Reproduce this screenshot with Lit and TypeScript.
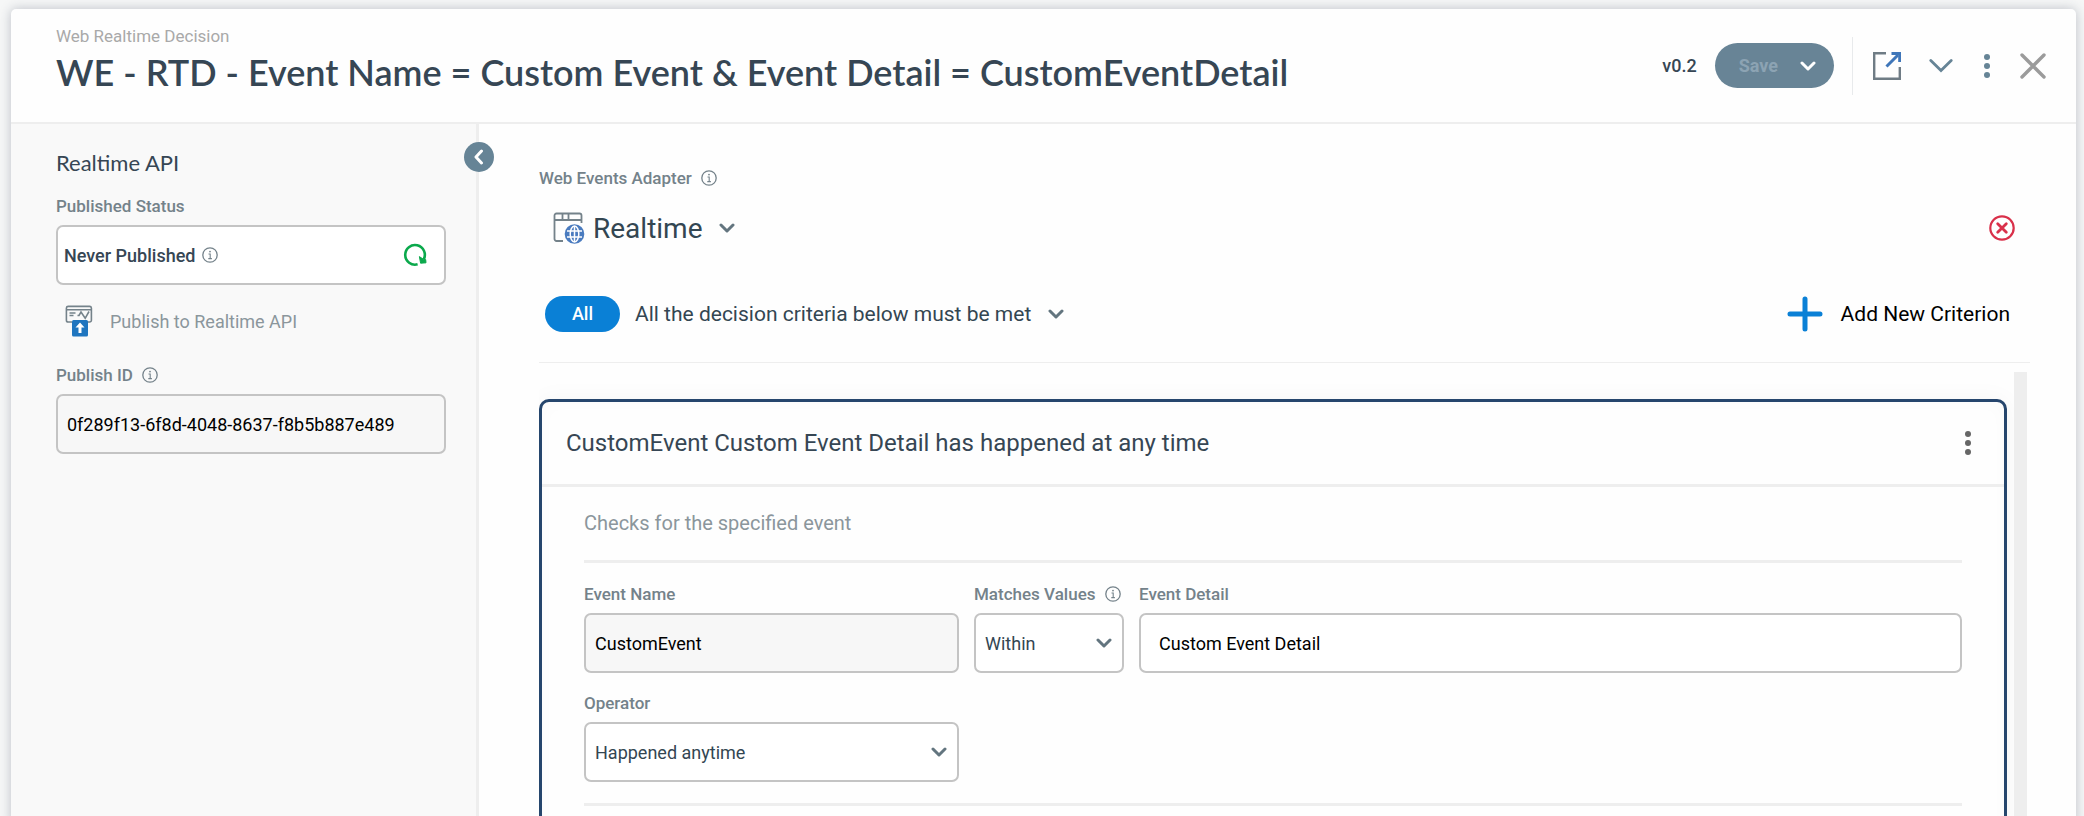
import { LitElement, html, css, svg } from "lit";
import { customElement, property } from "lit/decorators.js";

const infoIcon = html`<svg class="info" viewBox="0 0 16 16" width="16" height="16" role="img" aria-label="Information">
  <circle cx="8" cy="8" r="7.2" fill="none" stroke="#74828a" stroke-width="1.3"></circle>
  <circle cx="8" cy="4.6" r="0.9" fill="#74828a"></circle>
  <path d="M6.5 7h1.7v4.4M6.3 11.6h3.6" fill="none" stroke="#74828a" stroke-width="1.1"></path>
</svg>`;

const chevron = (color: string) => html`<svg class="chev" viewBox="0 0 16 10" width="16" height="10" aria-hidden="true">
  <path d="M2 2l6 6 6-6" fill="none" stroke=${color} stroke-width="3" stroke-linecap="round" stroke-linejoin="round"></path>
</svg>`;

const dots = (color: string) => svg`<svg viewBox="0 0 6 24" width="6" height="24" aria-hidden="true">
  <circle cx="3" cy="3" r="3" fill=${color}></circle>
  <circle cx="3" cy="12" r="3" fill=${color}></circle>
  <circle cx="3" cy="21" r="3" fill=${color}></circle>
</svg>`;

const base = css`
  * {
    box-sizing: border-box;
  }
  button,
  input,
  select {
    font: inherit;
    color: inherit;
    margin: 0;
  }
  button {
    display: flex;
    align-items: center;
    justify-content: center;
    padding: 0;
    border: 0;
    background: none;
    cursor: pointer;
  }
  svg {
    display: block;
    flex: none;
  }
  .field {
    display: flex;
    flex-direction: column;
    gap: 9px;
    min-width: 0;
  }
  .label {
    display: flex;
    align-items: center;
    gap: 9px;
    padding-top: 1px;
    font-size: 17px;
    line-height: 20px;
    font-weight: 500;
    color: #74828a;
    white-space: nowrap;
  }
  .box {
    width: 100%;
    height: 60px;
    border: 2px solid #c4c4c4;
    border-radius: 7px;
    background: #fff;
    font-size: 18px;
    padding: 0 9px;
  }
  input.box {
    color: #000;
  }
  input.box[readonly] {
    background: #f7f7f7;
  }
  .picker {
    display: inline-grid;
    align-items: center;
  }
  .picker select {
    grid-area: 1 / 1;
    appearance: none;
    color: #334652;
    cursor: pointer;
  }
  .picker .chev {
    grid-area: 1 / 1;
    justify-self: end;
    pointer-events: none;
  }
  .picker.boxed .chev {
    margin-right: 12px;
  }
`;

@customElement("decision-header")
export class DecisionHeader extends LitElement {
  @property() kind = "";
  @property() heading = "";
  @property() version = "";

  static styles = [
    base,
    css`
      :host {
        display: flex;
        justify-content: space-between;
        align-items: center;
        height: 115px;
        flex: none;
        padding: 0 29px 0 45px;
        border-bottom: 2px solid #eee;
      }
      .titles {
        align-self: flex-start;
        padding-top: 17px;
      }
      .kind {
        margin: 0 0 4px;
        font-size: 17px;
        line-height: 20px;
        color: #a9a9a9;
      }
      h1 {
        margin: 0;
        font: 600 36px/44px Lato, sans-serif;
        color: #364654;
        white-space: nowrap;
      }
      .actions {
        display: flex;
        align-items: center;
        gap: 18px;
      }
      .version {
        font-size: 18px;
        font-weight: 500;
        color: #364654;
      }
      .save {
        display: flex;
        align-items: center;
        height: 45px;
        border-radius: 23px;
        background: #688496;
        padding: 0 18px 0 24px;
        gap: 22px;
      }
      .save button {
        font-size: 18px;
        font-weight: 700;
        height: 45px;
      }
      .save button:disabled {
        color: #8ca3b3;
        cursor: default;
      }
      .rule {
        width: 1px;
        height: 58px;
        background: #e8eaec;
      }
      .icon {
        width: 28px;
        height: 28px;
      }
      .open {
        margin: 0 8px 0 2px;
      }
    `,
  ];

  render() {
    return html`
      <div class="titles">
        <p class="kind">${this.kind}</p>
        <h1>${this.heading}</h1>
      </div>
      <div class="actions">
        <span class="version">${this.version}</span>
        <div class="save">
          <button disabled>Save</button>
          <button aria-label="More save options">${chevron("#fff")}</button>
        </div>
        <span class="rule"></span>
        <button class="icon open" aria-label="Open in new window">
          <svg viewBox="0 0 28 28" width="28" height="28">
            <path d="M13 1.2H1.2v25.6h25.6V15" fill="none" stroke="#6f7c85" stroke-width="2.4"></path>
            <path d="M13.5 14.5L25 3" fill="none" stroke="#3f76b9" stroke-width="3"></path>
            <path d="M18.5 1.5h8.2v8.5" fill="none" stroke="#3f76b9" stroke-width="3"></path>
          </svg>
        </button>
        <button class="icon" aria-label="Collapse header">
          <svg viewBox="0 0 24 14" width="24" height="14">
            <path d="M1.8 1.6L12 11.6l10.2-10" fill="none" stroke="#668496" stroke-width="2.8" stroke-linecap="round"></path>
          </svg>
        </button>
        <button class="icon" aria-label="Menu">${dots("#668496")}</button>
        <button class="icon" aria-label="Close">
          <svg viewBox="0 0 26 26" width="26" height="26">
            <path d="M2 2l22 22M24 2L2 24" fill="none" stroke="#9b9b9b" stroke-width="3.4" stroke-linecap="round"></path>
          </svg>
        </button>
      </div>
    `;
  }
}

@customElement("realtime-sidebar")
export class RealtimeSidebar extends LitElement {
  @property() publishId = "";

  static styles = [
    base,
    css`
      :host {
        display: block;
        position: relative;
        flex: none;
        width: 468px;
        padding: 27px 30px 0 45px;
        background: #f9f9f9;
        border-right: 3px solid #eee;
      }
      h2 {
        margin: 0 0 20px;
        font: 400 22px/24px Lato, sans-serif;
        color: #364654;
      }
      .status {
        display: flex;
        align-items: center;
        gap: 7px;
        padding: 0 17px 0 6px;
        color: #364654;
        font-weight: 500;
      }
      .status button {
        margin-left: auto;
      }
      .publish {
        height: 36px;
        margin: 18px 0 25px;
        padding-left: 9px;
        gap: 17px;
        font-size: 18px;
        color: #8b969c;
      }
      .collapse {
        position: absolute;
        top: 18px;
        right: -18px;
        width: 30px;
        height: 30px;
        border-radius: 50%;
        background: #668496;
      }
    `,
  ];

  render() {
    return html`
      <h2>Realtime API</h2>
      <div class="field">
        <span class="label" id="status-label">Published Status</span>
        <div class="box status" role="group" aria-labelledby="status-label">
          <span>Never Published</span>${infoIcon}
          <button aria-label="Refresh status">
            <svg viewBox="0 0 24 24" width="24" height="24">
              <path d="M14.6 21.3A9.8 9.8 0 1 1 20.7 16.4" fill="none" stroke="#0ba94c" stroke-width="2.6"></path>
              <path d="M16.4 13.6l1.2 6.6 5.4-.4-.3-3.2-2-.1z" fill="#0ba94c" stroke="#0ba94c" stroke-linejoin="round"></path>
            </svg>
          </button>
        </div>
      </div>
      <button class="publish">
        <svg viewBox="0 0 28 32" width="28" height="32">
          <g fill="none" stroke="#74828a" stroke-width="1.6">
            <path d="M7 17H3.2A1.8 1.8 0 0 1 1.4 15.2V3A1.8 1.8 0 0 1 3.2 1.4h21.4A1.8 1.8 0 0 1 26.4 3v12.2A1.8 1.8 0 0 1 24.6 17H22"></path>
            <path d="M1.4 4.8h25M4.5 8h6M4.5 10.5h4M12.5 10.5h1.5l2-3.5 4.2 6.3L24 6.5"></path>
          </g>
          <rect x="7" y="15" width="16" height="16.5" rx="1.5" fill="#1f75bf"></rect>
          <path d="M15 17.5l4.5 5h-3v5.5h-3v-5.500h-3z" fill="#fff"></path>
        </svg>
        <span>Publish to Realtime API</span>
      </button>
      <div class="field">
        <label class="label" for="publish-id">Publish ID ${infoIcon}</label>
        <input class="box" id="publish-id" readonly .value=${this.publishId} />
      </div>
      <button class="collapse" aria-label="Collapse panel">
        <svg viewBox="0 0 10 16" width="10" height="16">
          <path d="M7.500 2L2 8l5.500 6" fill="none" stroke="#fff" stroke-width="3" stroke-linecap="round" stroke-linejoin="round"></path>
        </svg>
      </button>
    `;
  }
}

@customElement("criterion-card")
export class CriterionCard extends LitElement {
  @property() heading = "";
  @property() hint = "";

  static styles = [
    base,
    css`
      :host {
        display: block;
        border: 3px solid #26466d;
        border-radius: 10px;
        background: #fefefe;
        box-shadow: 0 0 24px rgba(0, 0, 0, 0.04), inset 0 0 18px rgba(0, 0, 0, 0.02);
      }
      header {
        display: flex;
        align-items: center;
        justify-content: space-between;
        height: 85px;
        padding: 0 24px;
        border-bottom: 3px solid #eee;
      }
      h3 {
        margin: 0;
        font-size: 24px;
        line-height: 28px;
        font-weight: 400;
        color: #364654;
      }
      .more {
        width: 24px;
        height: 28px;
      }
      .body {
        padding: 24px 42px 60px;
      }
      .hint {
        margin: 0;
        padding-bottom: 25px;
        font-size: 20px;
        line-height: 24px;
        color: #8b969c;
      }
      .fields {
        display: grid;
        grid-template-columns: minmax(0, 375px) 150px minmax(0, 1fr);
        gap: 19px 15px;
        padding: 20px 0 21px;
        border: solid #eee;
        border-width: 3px 0;
      }
      .operator {
        grid-column: 1;
      }
      .detail {
        padding: 0 18px;
      }
    `,
  ];

  render() {
    return html`
      <header>
        <h3>${this.heading}</h3>
        <button class="more" aria-label="Criterion menu">${dots("#666")}</button>
      </header>
      <div class="body">
        <p class="hint">${this.hint}</p>
        <div class="fields">
          <div class="field">
            <label class="label" for="event-name">Event Name</label>
            <input class="box" id="event-name" readonly value="CustomEvent" />
          </div>
          <div class="field">
            <label class="label" for="matches">Matches Values ${infoIcon}</label>
            <div class="picker boxed">
              <select class="box" id="matches"><option>Within</option></select>
              ${chevron("#63757f")}
            </div>
          </div>
          <div class="field">
            <label class="label" for="event-detail">Event Detail</label>
            <input class="box detail" id="event-detail" value="Custom Event Detail" />
          </div>
          <div class="field operator">
            <label class="label" for="operator">Operator</label>
            <div class="picker boxed">
              <select class="box" id="operator"><option>Happened anytime</option></select>
              ${chevron("#63757f")}
            </div>
          </div>
        </div>
      </div>
    `;
  }
}

@customElement("app-root")
export class AppRoot extends LitElement {
  static styles = [
    base,
    css`
      :host {
        display: flex;
        height: 100vh;
        padding: 9px 8px 0 11px;
        overflow: hidden;
        background: #f6f7f7;
        font-family: Roboto, sans-serif;
      }
      .panel {
        display: flex;
        flex-direction: column;
        flex: 1;
        min-width: 0;
        border-radius: 5px 5px 0 0;
        background: #fefefe;
        box-shadow: 0 0 12px rgba(40, 50, 80, 0.28);
      }
      .columns {
        display: flex;
        flex: 1;
        min-height: 0;
      }
      main {
        display: flex;
        flex-direction: column;
        flex: 1;
        min-width: 0;
        padding: 43px 46px 0 60px;
      }
      .adapter {
        display: flex;
        align-items: center;
        height: 46px;
        margin: 17px 0 45px;
        padding: 0 15px 0 14px;
        gap: 8px;
      }
      .adapter select,
      .rule select {
        border: 0;
        background: none;
      }
      .adapter select {
        padding: 0 32px 0 0;
        font-size: 28px;
      }
      .remove {
        margin-left: auto;
      }
      .rule {
        display: flex;
        align-items: center;
        gap: 15px;
        padding: 0 20px 30px 6px;
        border-bottom: 1px solid #eee;
      }
      .pill {
        width: 75px;
        height: 36px;
        border-radius: 18px;
        background: #0a80d6;
        color: #fff;
        font-size: 18px;
        font-weight: 500;
        line-height: 36px;
        text-align: center;
      }
      .rule select {
        padding: 0 32px 0 0;
        font-size: 21px;
      }
      .add {
        margin-left: auto;
        gap: 18px;
        font-size: 21px;
        color: #000;
      }
      .scroll {
        display: flex;
        flex: 1;
        min-height: 0;
        margin-top: 9px;
        padding-right: 3px;
      }
      .list {
        flex: 1;
        min-width: 0;
        padding: 27px 7px 0 0;
        overflow-y: auto;
        scrollbar-width: none;
      }
      .track {
        flex: none;
        width: 13px;
        background: #eee;
      }
    `,
  ];

  render() {
    return html`
      <div class="panel">
        <decision-header
          kind="Web Realtime Decision"
          heading="WE - RTD - Event Name = Custom Event &amp; Event Detail = CustomEventDetail"
          version="v0.2"
        ></decision-header>
        <div class="columns">
          <realtime-sidebar .publishId=${"0f289f13-6f8d-4048-8637-f8b5b887e489"}></realtime-sidebar>
          <main>
            <label class="label" for="adapter">Web Events Adapter ${infoIcon}</label>
            <div class="adapter">
              <svg viewBox="0 0 32 32" width="32" height="32" aria-hidden="true">
                <g fill="none" stroke="#74828a" stroke-width="1.8">
                  <path d="M10 29H3.5A2 2 0 0 1 1.5 27V3.5A2 2 0 0 1 3.5 1.5h23A2 2 0 0 1 28.5 3.5V11M1.5 8h27M9.5 1.5V8M15.5 1.5V8"></path>
                </g>
                <circle cx="21.5" cy="22" r="9.8" fill="#4a7bbf"></circle>
                <g fill="none" stroke="#fff" stroke-width="1.5">
                  <ellipse cx="21.5" cy="22" rx="4.3" ry="8"></ellipse>
                  <path d="M21.5 14v16M14 19h15M14 25h15"></path>
                </g>
              </svg>
              <div class="picker">
                <select id="adapter"><option>Realtime</option></select>
                ${chevron("#63757f")}
              </div>
              <button class="remove" aria-label="Remove adapter">
                <svg viewBox="0 0 26 26" width="26" height="26">
                  <circle cx="13" cy="13" r="11.7" fill="none" stroke="#d9304a" stroke-width="2.2"></circle>
                  <path d="M8.7 8.7l8.6 8.6M17.3 8.7l-8.6 8.6" fill="none" stroke="#d9304a" stroke-width="2.8" stroke-linecap="round"></path>
                </svg>
              </button>
            </div>
            <div class="rule">
              <span class="pill">All</span>
              <div class="picker">
                <select aria-label="Criteria rule"><option>All the decision criteria below must be met</option></select>
                ${chevron("#63757f")}
              </div>
              <button class="add">
                <svg viewBox="0 0 36 36" width="36" height="36" aria-hidden="true">
                  <path d="M18 3v30M3 18h30" fill="none" stroke="#0a80d6" stroke-width="5" stroke-linecap="round"></path>
                </svg>
                <span>Add New Criterion</span>
              </button>
            </div>
            <div class="scroll">
              <div class="list">
                <criterion-card
                  heading="CustomEvent Custom Event Detail has happened at any time"
                  hint="Checks for the specified event"
                ></criterion-card>
              </div>
              <div class="track"></div>
            </div>
          </main>
        </div>
      </div>
    `;
  }
}
